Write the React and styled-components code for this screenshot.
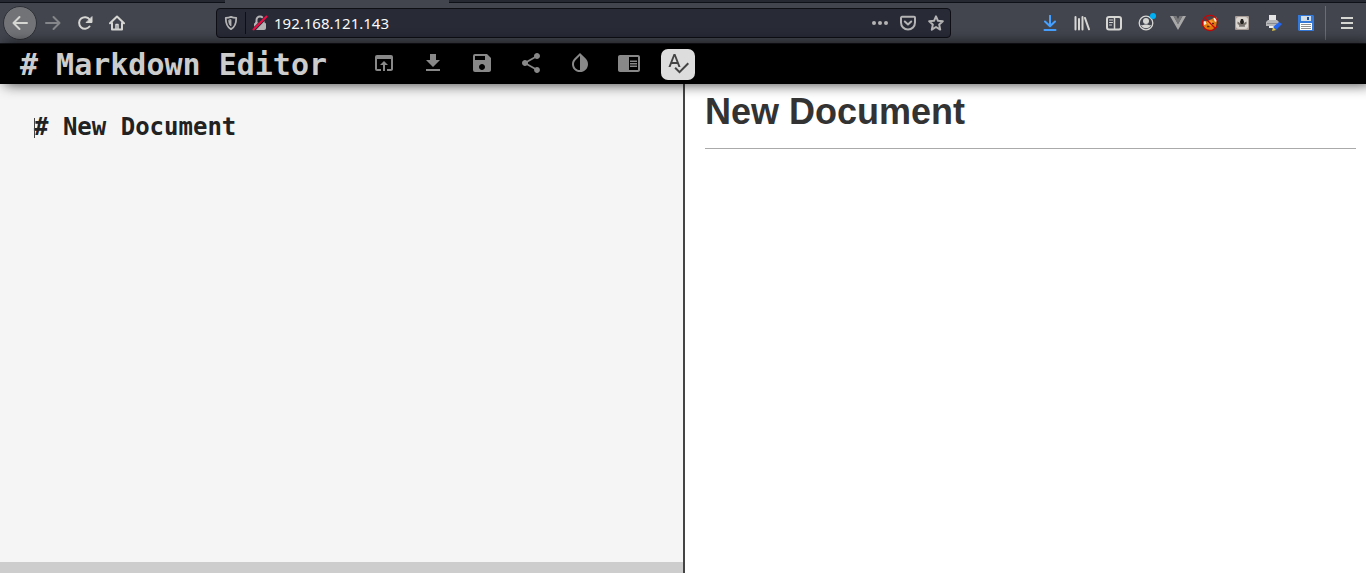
import React, { useState } from "react";
import styled, { createGlobalStyle, css } from "styled-components";
import {
  MdOpenInBrowser,
  MdFileDownload,
  MdSave,
  MdShare,
  MdInvertColors,
  MdChromeReaderMode,
  MdSpellcheck,
} from "react-icons/md";

const GlobalStyle = createGlobalStyle`
  * { box-sizing: border-box; }
  body { margin: 0; background: #fff; font-family: "Liberation Sans", Arial, sans-serif; }
  button { padding: 0; border: 0; background: none; cursor: pointer; }
  svg { display: block; flex: none; }
`;

const Page = styled.div`
  min-height: 100vh;
  display: flex;
  flex-direction: column;
`;

/* Browser chrome */
const TabStrip = styled.div`
  display: grid;
  grid-template-columns: 225px 224px 1fr;
  height: 3px;
  background: #42454e;
`;

const TabEdge = styled.div`
  background: ${(p) => (p.$active ? "#42454e" : "#252731")};
  border-bottom: ${(p) => (p.$active ? "0" : "1px solid #0f1118")};
`;

const NavBar = styled.nav`
  display: flex;
  align-items: center;
  height: 41px;
  padding: 0 3px;
  background: #42454e;
  border-bottom: 1px solid #15161c;
  color: #d6d6d3;
`;

const NavButton = styled.button`
  display: grid;
  place-items: center;
  width: 32px;
  height: 34px;
  color: inherit;
  &:disabled { color: #85868a; }
  ${(p) =>
    p.$round &&
    css`
      width: 34px;
      border: 1px solid #2e3037;
      border-radius: 50%;
      background: #727377;
    `}
`;

const AddressBar = styled.div`
  display: flex;
  align-items: center;
  flex: 0 1 735px;
  height: 30px;
  margin-left: 83px;
  border: 1px solid #0e0f15;
  border-radius: 4px;
  background: #282a36;
  color: #b4b4b4;
`;

const ChipButton = styled(NavButton)`
  width: 28px;
  height: 28px;
`;

const Separator = styled.span`
  width: 1px;
  height: 22px;
  background: #0e0f15;
`;

const Address = styled.input`
  flex: 1;
  min-width: 0;
  padding: 0;
  border: 0;
  outline: 0;
  background: none;
  color: #fafafa;
  font: 15px "Noto Sans", sans-serif;
`;

const Extensions = styled.div`
  display: flex;
  align-items: center;
  margin-left: auto;
`;

const MenuArea = styled.div`
  display: flex;
  align-items: center;
  height: 34px;
  margin-left: 3px;
  padding-left: 5px;
  border-left: 1px solid #6b6d74;
`;

/* Editor */
const Header = styled.header`
  z-index: 1;
  display: flex;
  align-items: center;
  gap: 40px;
  height: 40px;
  padding-left: 20px;
  background: #000;
  box-shadow: 5px 0 14px rgba(0, 0, 0, 0.8);
`;

const Title = styled.h1`
  margin: 0;
  padding-top: 2px;
  color: #ccc;
  font: bold 30px/38px "DejaVu Sans Mono", monospace;
  white-space: nowrap;
`;

const Tools = styled.div`
  display: flex;
  gap: 15px;
`;

const Tool = styled.button`
  display: grid;
  place-items: center;
  width: 34px;
  height: 31px;
  padding-bottom: 2px;
  border-radius: 7px;
  color: ${(p) => (p.$active ? "#444" : "#888")};
  background: ${(p) => (p.$active ? "#ddd" : "transparent")};
`;

const Workspace = styled.main`
  flex: 1;
  display: grid;
  grid-template-columns: 1fr 1fr;
`;

const EditorPane = styled.section`
  position: relative;
  display: flex;
  flex-direction: column;
  background: #f5f5f5;
`;

const Source = styled.textarea`
  flex: 1;
  width: 100%;
  padding: 29px 34px;
  border: 0;
  outline: 0;
  resize: none;
  background: transparent;
  color: #222;
  font: bold 24px/29px "DejaVu Sans Mono", monospace;
`;

const Caret = styled.span`
  position: absolute;
  top: 34px;
  left: 34px;
  width: 1px;
  height: 20px;
  background: #444;
`;

const StatusBar = styled.footer`
  height: 11px;
  background: #cdcdcd;
`;

const Preview = styled.article`
  padding: 8px 10px 8px 20px;
  border-left: 2px solid #444;
  background: #fff;
`;

const PreviewTitle = styled.h1`
  margin: 0;
  padding-bottom: 16px;
  border-bottom: 1px solid #aaa;
  color: #333;
  font-size: 36px;
  line-height: 40px;
`;

function Line({ size = 16, width = 2, children }) {
  return (
    <svg
      width={size}
      height={size}
      viewBox="0 0 16 16"
      fill="none"
      stroke="currentColor"
      strokeWidth={width}
      strokeLinecap="round"
      strokeLinejoin="round"
      aria-hidden="true"
    >
      {children}
    </svg>
  );
}

const BackIcon = () => <Line><path d="M15 8H1.5M7.5 2 1.5 8l6 6" /></Line>;
const ForwardIcon = () => <Line><path d="M1 8h13.500M8.500 2l6 6-6 6" /></Line>;
const ReloadIcon = () => (
  <Line>
    <path d="M12.500 11.500A5.800 5.800 0 1 1 12.600 4.500" />
    <path d="M15 2v5.500h-5.500z" fill="currentColor" strokeWidth="1" />
  </Line>
);
const HomeIcon = () => (
  <Line>
    <path d="M1 8.300 8 1.500l7 6.800M3 8v6.500h10V8" />
    <path d="M7 14V9.500h2V14" strokeWidth="1.500" />
  </Line>
);
const ShieldIcon = () => (
  <Line size={14}>
    <path d="M8 1c2 .9 4 1.200 6 1.200 0 6-.8 10-6 12.800C2.800 12.200 2 8.200 2 2.200 4 2.200 6 1.900 8 1z" />
    <path d="M8 4.500v7C6 10 5.500 8 5.500 5z" fill="currentColor" strokeWidth="1" />
  </Line>
);
const InsecureIcon = () => (
  <Line>
    <path d="M4.500 8V5a3.500 3.500 0 0 1 7 0v3" />
    <rect x="2.500" y="8" width="11" height="6.500" rx="1" fill="currentColor" strokeWidth="1" />
    <path d="M1 15.500 14.500 1.500" stroke="#282a36" strokeWidth="3.500" />
    <path d="M1.500 14.500 14.500 1.500" stroke="#ed0c43" />
  </Line>
);
const DotsIcon = () => (
  <svg width="16" height="16" viewBox="0 0 16 16" fill="currentColor" aria-hidden="true">
    <circle cx="2" cy="8" r="2" /><circle cx="8" cy="8" r="2" /><circle cx="14" cy="8" r="2" />
  </svg>
);
const PocketIcon = () => (
  <Line>
    <path d="M2 1.800h12a1 1 0 0 1 1 1V7.500a7 7 0 0 1-14 0V2.800a1 1 0 0 1 1-1zM4.800 6.500 8 9.500l3.200-3" />
  </Line>
);
const StarIcon = () => (
  <Line><path d="m8 1.300 2 4.500 4.800.5-3.600 3.300 1 5L8 12l-4.200 2.600 1-5L1.200 6.300 6 5.800z" /></Line>
);
const DownloadIcon = () => (
  <Line><path d="M8 .8v10M3 6.500l5 4.800 5-4.800M2.500 15h11" stroke="#46a0ff" /></Line>
);
const LibraryIcon = () => (
  <Line><path d="M1.500 2v12.500M5 4v10.500M8.500 2v12.500M11 3l4 11.300" /></Line>
);
const SidebarIcon = () => (
  <Line>
    <rect x="1" y="2" width="14" height="12.500" rx="2" />
    <path d="M8.500 2.500V14" strokeWidth="1.500" />
    <path d="M3.500 5h3M3.500 7.500h3M3.500 10h2" strokeWidth="1" />
  </Line>
);
const AccountIcon = () => (
  <svg width="20" height="22" viewBox="0 0 20 22" fill="currentColor" aria-hidden="true">
    <circle cx="10" cy="11" r="6.800" fill="none" stroke="currentColor" strokeWidth="1.300" />
    <circle cx="10" cy="9" r="3" />
    <path d="M5 13c2.500.5 3-.5 5-.5s2.500 1 5 .5c-1 2.200-2.800 3.300-5 3.300s-4-1.100-5-3.300z" />
    <circle cx="17" cy="4" r="3" fill="#00b0f4" />
  </svg>
);
const VueIcon = () => (
  <svg width="16" height="16" viewBox="0 0 16 16" aria-hidden="true">
    <path d="M0 1h3.500L8 9l4.500-8H16L8 15z" fill="#a8a8a8" />
    <path d="M3.500 1h3L8 4l1.500-3h3L8 9.300z" fill="#77777a" />
  </svg>
);
const FoxIcon = () => (
  <svg width="18" height="18" viewBox="0 0 18 18" aria-hidden="true">
    <path d="M2 11.500 3 8l3-1 5-2 3-2.500 2 4-1 6-4 3.500-6-.5z" fill="#e0780c" />
    <path d="m2.500 7.500 2-.5 1 3-2.500 1zM12.500 4.500l2.500-1.500 1.500 4-2.500 1z" fill="#fff0dc" />
    <path d="m6 8 4-2 3 2-1 4-4 0z" fill="#f49a2c" />
    <path d="M6 12.500h2.500M11 9.500h2" stroke="#592b16" strokeWidth="1.500" />
    <circle cx="9" cy="9" r="7.700" fill="none" stroke="#c80505" strokeWidth="1.200" />
    <path d="m3.500 3.500 11 11" stroke="#c80505" strokeWidth="1.200" />
  </svg>
);
const EmblemIcon = () => (
  <svg width="14" height="14" viewBox="0 0 14 14" aria-hidden="true">
    <rect width="14" height="14" rx="1" fill="#a89e97" />
    <rect x="1" y="1" width="12" height="12" rx="3" fill="#dcd6d1" />
    <path d="M2.500 5.500 5 7l1-2h2l1 2 2.500-1.500V8L9 9.500H5L2.500 8z" fill="#77706b" />
    <path d="M6 3h2l1 3-1 2H6L5 6z" fill="#24221f" />
    <path d="M4 10h6" stroke="#4b4642" />
  </svg>
);
const PrintIcon = () => (
  <svg width="16" height="16" viewBox="0 0 16 16" aria-hidden="true">
    <path d="M3 0h7v6H3z" fill="#e4e4e4" />
    <path d="M2 5h9l2 2v4H0V7z" fill="#b5b6b8" />
    <path d="M1 8h10v1H1z" fill="#888a90" />
    <path d="M3 11h6v2H3z" fill="#eee" />
    <path d="m7 12 6-5 3 2-6 6z" fill="#2466ee" />
    <path d="m7 12 3 3-4 1z" fill="#dec34b" />
  </svg>
);
const FloppyIcon = () => (
  <svg width="16" height="16" viewBox="0 0 16 16" aria-hidden="true">
    <path d="M0 0h15l1 1v15H1l-1-1z" fill="#3478d8" />
    <path d="M3 1h10v5H3z" fill="#d4dce6" />
    <path d="M9 2h2v3H9z" fill="#174da0" />
    <path d="M2 8h12v7H2z" fill="#fff" />
    <path d="M3 9.500h10M3 11.500h10M3 13.500h10" stroke="#909090" />
  </svg>
);
const MenuIcon = () => (
  <svg width="12" height="12" viewBox="0 0 12 12" aria-hidden="true">
    <path d="M0 1h12M0 6h12M0 11h12" stroke="currentColor" strokeWidth="2" />
  </svg>
);

const extensions = [
  ["Downloads", DownloadIcon],
  ["Library", LibraryIcon],
  ["Sidebars", SidebarIcon],
  ["Account", AccountIcon],
  ["Vue devtools", VueIcon],
  ["Proxy switcher", FoxIcon],
  ["Emblem", EmblemIcon],
  ["Print edit", PrintIcon],
  ["Save page", FloppyIcon],
];

const tools = [
  ["Open", MdOpenInBrowser],
  ["Download", MdFileDownload],
  ["Save", MdSave],
  ["Share", MdShare],
  ["Invert colors", MdInvertColors],
  ["Reader mode", MdChromeReaderMode],
  ["Spellcheck", MdSpellcheck],
];

export default function App() {
  const [text, setText] = useState("# New Document");
  return (
    <Page>
      <GlobalStyle />
      <TabStrip>
        <TabEdge />
        <TabEdge $active />
        <TabEdge />
      </TabStrip>
      <NavBar>
        <NavButton $round aria-label="Back"><BackIcon /></NavButton>
        <NavButton disabled aria-label="Forward"><ForwardIcon /></NavButton>
        <NavButton aria-label="Reload"><ReloadIcon /></NavButton>
        <NavButton aria-label="Home"><HomeIcon /></NavButton>
        <AddressBar>
          <ChipButton aria-label="Tracking protection"><ShieldIcon /></ChipButton>
          <Separator />
          <ChipButton aria-label="Connection not secure"><InsecureIcon /></ChipButton>
          <Address aria-label="Address" defaultValue="192.168.121.143" />
          <ChipButton aria-label="Page actions"><DotsIcon /></ChipButton>
          <ChipButton aria-label="Save to Pocket"><PocketIcon /></ChipButton>
          <ChipButton aria-label="Bookmark"><StarIcon /></ChipButton>
        </AddressBar>
        <Extensions>
          {extensions.map(([label, Icon]) => (
            <NavButton key={label} aria-label={label}><Icon /></NavButton>
          ))}
          <MenuArea>
            <NavButton aria-label="Menu"><MenuIcon /></NavButton>
          </MenuArea>
        </Extensions>
      </NavBar>
      <Header>
        <Title># Markdown Editor</Title>
        <Tools>
          {tools.map(([label, Icon]) => (
            <Tool key={label} aria-label={label} $active={label === "Spellcheck"}>
              <Icon size={24} />
            </Tool>
          ))}
        </Tools>
      </Header>
      <Workspace>
        <EditorPane>
          <Source
            aria-label="Markdown source"
            spellCheck={false}
            value={text}
            onChange={(e) => setText(e.target.value)}
          />
          <Caret />
          <StatusBar />
        </EditorPane>
        <Preview>
          <PreviewTitle>{text.replace(/^#\s*/, "")}</PreviewTitle>
        </Preview>
      </Workspace>
    </Page>
  );
}
